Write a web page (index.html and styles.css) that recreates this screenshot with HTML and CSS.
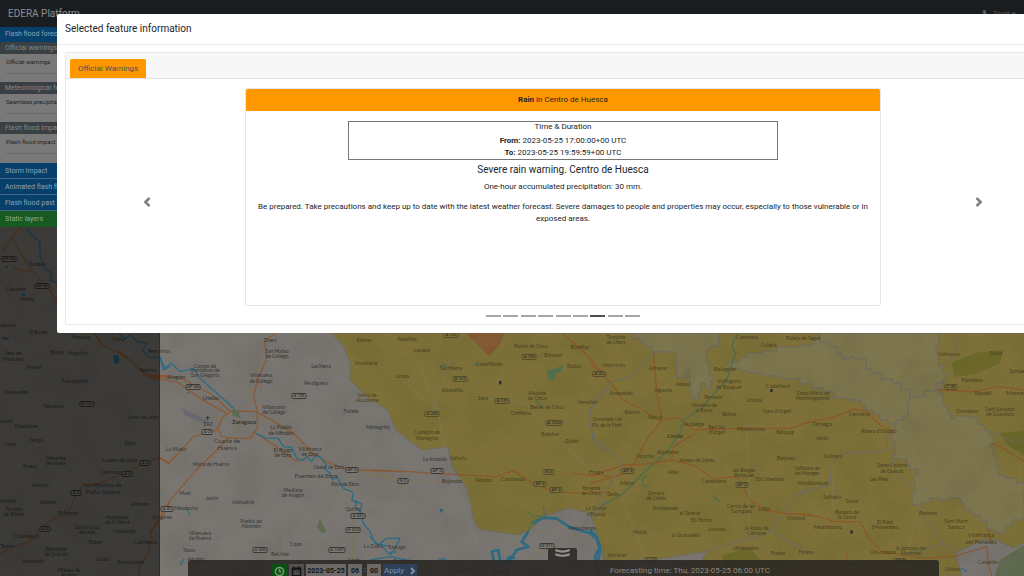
FILE: index.html
```html
<!DOCTYPE html>
<html lang="en">
<head>
<meta charset="utf-8">
<meta name="viewport" content="width=device-width, initial-scale=1">
<title>EDERA Platform</title>
<link rel="stylesheet" href="styles.css">
</head>
<body>
<svg class="map" viewBox="0 0 1024 576" preserveAspectRatio="xMinYMin slice" role="img" aria-label="Warnings map">
  <defs>
    <filter id="relief" x="0" y="0" width="100%" height="100%">
      <feTurbulence type="fractalNoise" baseFrequency="0.03" numOctaves="4" seed="8"/>
      <feColorMatrix values="0 0 0 0 0  0 0 0 0 0  0 0 0 0 0  0.5 0 0 0 -0.2"/>
    </filter>
  </defs>
  <rect class="land" width="1024" height="576"/>
  <path class="warn" d="M332 333L344 347 350 362V380L367 397 388 410 396 430 422 450 448 447 453 468 467 488 475 524 480 529 517 535 528 531 543 517 568 508 590 513 593 522 605 562 667 558 708 551 690 576H962L955 553 982 540 997 540 1013 548 1024 543V333Z"/>
  <path class="wood" d="M1024 545L1000 560 995 576H1024Z"/>
  <path class="grove" d="M952 363L975 353 1003 350 1000 363 975 374 955 377ZM1000 433L1024 431V455L1008 446ZM722 555L750 548 762 562 790 563 770 576H726Z"/>
  <path class="severe" d="M470 337L489 356 500 345 504 333H466Z"/>
  <path class="nodata" d="M633 333V338H640V342H645V346H652V352H676V370H677V378H686V370H690V390H691V397H695V400H698V392H701V383H706V388H711V380H713V376H709V362H706V350H710V346H719V333Z"/>
  <path class="nodata" d="M728 362V368H738V370H748V373H763V376H782V379H800V384H812V388H823V392H834V398H848V400H861V404H866V410H873V414H880V420H888V424H895V430H892V442H895V455H893V459H907V465H910V469H918V475H914V483H915V493H912V505H922V502H930V498H938V500H950V498H961V503H965V510H972V515H980V521H987V526H988V530H995V533H1005V526H1012V520H1024V483H1016V478H1005V475H998V465H996V456H993V447H989V444H993V437H989V430H984V425H978V418H970V416H955V419H951V413H947V406H943V394H938V390H942V380H946V372H943V366H938V353H936V347H939V333H820V338H813V345H800V347H777V351H763V353H748V357H740V362Z"/>
  <path class="border" d="M820 334V342H830V347H837V353H842V359H850V357H855V359H866V369H872V373H882V379H893V383H901V389H910V397H924V391H936V383H945M910 397V402H908V416H904V420H896V425"/>
  <rect class="shade" width="1024" height="576" filter="url(#relief)"/>
  <g transform="translate(0 220) scale(.3333)">
    <path class="road" d="M8 95L35 52 65 20M35 52L90 145 150 210 170 250M38 140L60 150 95 155M275 330L305 372 360 400 400 430 440 470 510 475M285 340L310 378 370 402 415 445 450 468 510 467"/>
    <path class="minor" d="M60 130L45 245 10 305M0 385L60 400 110 415 180 398 300 375M65 235L95 240 125 275 168 305"/>
    <path class="river" d="M78 25L95 45 120 65V110L135 145 155 160 150 182 170 186M355 340L375 355 392 345 412 365 440 370 428 390 450 415 480 410 490 450 510 440"/>
    <path class="lake" d="M340 405L357 407V430L343 431ZM16 137H23V145H16ZM66 220H75V227H66Z"/>
  </g>
  <g transform="translate(0 390) scale(.3333)">
    <path class="road" d="M0 490L50 468 90 455 120 415 165 385 200 375 225 320 250 285 300 280 370 250 435 218 478 202 510 220M510 335L485 385 455 420 445 490 420 525 417 560"/>
    <path class="minor" d="M20 330L60 380 85 440 80 500 130 550"/>
    <path class="faint" d="M250 50L290 100 298 200 290 280M370 115L450 35 475 0"/>
  </g>
  <g transform="translate(150 330) scale(.3333)">
    <path class="road" d="M0 135L90 143 130 165 180 190 240 243 315 245 375 275 430 310 490 370 530 395 590 420 720 422M375 12L345 30 348 90 325 145 310 195 322 245V295L300 325 260 325 215 320 202 295 220 260 242 245M0 145L80 155 150 205 230 250M30 385L55 400 85 370 130 320 200 300M0 610L60 510 130 430 235 325M308 305L380 350 440 395 490 372"/>
    <path class="minor" d="M345 30L315 130 285 240M320 260L380 280 440 340 560 410 720 440M300 320L440 400 520 450 600 530 610 560 608 690M180 262L230 265M245 290L315 260M260 250L270 290 250 315"/>
    <path class="faint" d="M395 60L350 150 325 240M440 395L410 520 400 690M0 640L130 625 310 655M110 180L60 240M460 190L520 100"/>
    <path class="river" d="M30 80L45 115 65 100 90 125 130 115 150 145 200 190 230 215 250 235 270 262M318 310L350 325 385 325 400 350 425 352 440 385 460 392 470 380 485 395 495 378 510 380 530 405 522 415 540 430 548 450 560 440 580 475 605 485 610 490 605 510 622 515 615 530 630 545 640 580 660 605 675 640 720 650M610 515L635 520 632 545M110 535L120 555M90 705L103 685"/>
    <path class="wood" d="M485 580L500 590 510 568 530 605 515 610 505 595ZM108 185H120V192H108ZM245 245L270 243 265 262 248 258Z"/>
    <path class="zone" d="M95 235L180 275 165 283 105 255Z"/>
    <path class="plane" d="M167 263H179M173 257V270"/>
  </g>
  <g transform="translate(370 330) scale(.3333)">
    <path class="road" d="M0 422L120 425 190 430 380 440 430 422 480 455 550 485 640 490 720 485M580 12L635 60 690 120 715 135M600 430L720 440"/>
    <path class="minor" d="M0 437L130 455 350 452 540 425 700 440M460 690L560 650 640 600 700 550"/>
    <path class="faint" d="M95 150L190 230 220 240M0 540L80 460M140 90L200 230 235 400 340 690M240 90L185 250M350 205L470 220 530 300 720 470M650 385L700 440"/>
    <path class="river wide" d="M490 580L520 563 560 565 600 592 660 610 680 625 690 660 685 690M475 605L455 635 475 650 440 660 415 700 390 690 385 660 365 665 375 705 405 700M405 700L420 680 435 685"/>
    <path class="river" d="M0 620L25 645 50 625H90L75 655 60 675M30 640L55 670 80 665M0 690L60 680 110 690 180 700 220 685 270 720 310 715 340 735"/>
    <path class="lake" d="M210 535L222 541 212 548Z"/>
    <path class="pond" d="M530 122L555 117 578 104 575 125 560 128 550 150 542 150 535 145ZM318 100H326V108H318ZM215 103H230V111H215Z"/>
    <path class="teal" d="M475 545L490 560 525 558 520 530M475 605L485 575 520 560M497 210L520 235"/>
    <path class="border" d="M720 175L680 200 657 255 670 330 720 370M670 575L710 510 635 590"/>
    <path class="pin" d="M387 153H394V163H387Z"/>
  </g>
  <g transform="translate(590 330) scale(.3333)">
    <path class="road" d="M0 100L60 155 100 210 150 235 205 270 265 262 310 300 440 295 600 295 660 275M190 65L200 180 215 270 170 330 130 405M0 440L100 405 170 402 245 390 310 405 370 445 440 440 480 510 520 540 600 552 660 552M245 390L250 350 315 310M0 460L90 435 130 405"/>
    <path class="minor" d="M250 320L315 305 340 300M0 475L60 440"/>
    <path class="faint" d="M250 320L430 420M310 80L170 230 120 255M70 440L170 690M480 640L470 280"/>
    <path class="teal" d="M440 10L425 50 437 70 410 150 360 205 330 240 280 270 270 310 235 360 170 420 100 490 40 525M170 435L155 450 163 470 180 465M370 500L390 515"/>
    <path class="border" d="M190 65L125 140 65 155 0 240 15 330 60 360 100 405 20 520 0 560M355 663L545 605 600 530 620 495 660 480M545 605L660 670"/>
    <path class="river wide" d="M0 600L20 620 30 650 15 680 25 738"/>
    <path class="pin" d="M541 177H548V186H541Z"/>
  </g>
  <g transform="translate(800 330) scale(.3333)">
    <path class="road" d="M0 283L50 270 100 263 160 237 200 245 240 285 285 310M415 180L520 185 600 170 672 180M575 340L610 355 672 395M0 553L60 560 100 575 180 575 210 630 245 665 370 685 460 680 560 650 565 700 575 738M140 670V738M565 600L575 640"/>
    <path class="border" d="M0 488L90 465 95 395 130 370 265 362 260 320 285 290M280 385L290 430 335 470M365 530L375 570 430 640 310 675M430 640L465 670M460 20L470 50 440 110M560 300L650 340 672 325"/>
    <path class="faint" d="M0 470L130 640M95 400L100 540M360 510L320 680"/>
    <path class="river" d="M485 715L500 725"/>
    <path class="pin" d="M151 601H158V611H151Z"/>
  </g>
  <g id="labels"></g>
</svg>

<header class="navbar">
  <a class="brand" href="#">EDERA Platform</a>
  <a class="tools" href="#">
    <svg class="wrench" viewBox="0 0 16 16" aria-hidden="true"><path d="M2 1a4 4 0 0 1 6 5l7 7-2 2-7-7A4 4 0 0 1 1 3l3 2 1-1z"/></svg>
    Tools ▾
  </a>
</header>

<aside class="sidebar">
  <a class="group" href="#">Flash flood forecast</a>
  <section class="layers">
    <h2 class="layers-title">Official warnings</h2>
    <a class="layer" href="#">Official warnings</a>
    <hr class="rule">
  </section>
  <section class="layers">
    <h2 class="layers-title">Meteorological forecasts</h2>
    <a class="layer" href="#">Seamless precipitation</a>
    <hr class="rule">
  </section>
  <section class="layers">
    <h2 class="layers-title">Flash flood impact</h2>
    <a class="layer" href="#">Flash flood impact</a>
    <hr class="rule">
  </section>
  <a class="group" href="#">Storm Impact</a>
  <a class="group" href="#">Animated flash flood</a>
  <a class="group" href="#">Flash flood past events</a>
  <a class="group static" href="#">Static layers</a>
</aside>

<footer class="timebar">
  <button class="fold" type="button" aria-label="Hide time bar">
    <svg viewBox="0 0 28 12" aria-hidden="true"><path d="M7 2Q14 5 21 2M7 6Q14 9 21 6"/></svg>
  </button>
  <form class="picker">
    <button class="now" type="button" aria-label="Now"><svg viewBox="0 0 16 16" aria-hidden="true"><circle cx="8" cy="8" r="5"/><path d="M8 5V8L10 9"/></svg></button>
    <button class="cal" type="button" aria-label="Open calendar"><svg viewBox="0 0 16 16" aria-hidden="true"><path d="M3 4H13V13H3ZM3 5H13M5 2V4M11 2V4M5 8H6M8 8H9M10 8H11"/></svg></button>
    <input class="field date" type="text" value="2023-05-25" aria-label="Date">
    <input class="field part" type="text" value="06" aria-label="Hour">
    <span class="colon">:</span>
    <input class="field part" type="text" value="00" aria-label="Minute">
    <button class="apply" type="button">Apply <svg viewBox="0 0 8 8" aria-hidden="true"><path d="M3 1L6 4 3 7"/></svg></button>
  </form>
  <p class="forecast">Forecasting time: Thu, 2023-05-25 06:00 UTC</p>
</footer>

<div class="modal" role="dialog" aria-labelledby="modal-title">
  <div class="modal-header"><h1 class="modal-title" id="modal-title">Selected feature information</h1></div>
  <div class="panel">
    <div class="tabs"><a class="tab" href="#">Official Warnings</a></div>
    <div class="carousel">
      <button class="arrow" type="button" aria-label="Previous"><svg viewBox="0 0 8 8" aria-hidden="true"><path d="M5.25 0l1.5 1.5L4.25 4l2.5 2.5L5.25 8l-4-4z"/></svg></button>
      <article class="warning">
        <div class="warning-head"><b>Rain</b> in Centro de Huesca</div>
        <div class="warning-body">
          <div class="duration">
            <h3 class="duration-title">Time &amp; Duration</h3>
            <p class="when"><b>From:</b> 2023-05-25 17:00:00+00 UTC</p>
            <p class="when"><b>To:</b> 2023-05-25 19:59:59+00 UTC</p>
          </div>
          <h2 class="warning-title">Severe rain warning. Centro de Huesca</h2>
          <p class="text">One-hour accumulated precipitation: 30 mm.</p>
          <p class="text">Be prepared. Take precautions and keep up to date with the latest weather forecast. Severe damages to people and properties may occur, especially to those vulnerable or in exposed areas.</p>
        </div>
      </article>
      <button class="arrow" type="button" aria-label="Next"><svg viewBox="0 0 8 8" aria-hidden="true"><path d="M2.75 0l-1.5 1.5L3.75 4l-2.5 2.5L2.75 8l4-4z"/></svg></button>
    </div>
    <div class="dots"><i></i><i></i><i></i><i></i><i></i><i></i><i class="on"></i><i></i><i></i></div>
  </div>
</div>
<script src="map.js"></script>
</body>
</html>
```

FILE: styles.css
```css
* { box-sizing: border-box; }
html { height: 100%; overflow: hidden; }
body {
  margin: 0;
  height: 100%;
  position: relative;
  overflow: hidden;
  background: #777470;
  color: #212529;
  font-family: Roboto, "Liberation Sans", sans-serif;
  font-size: 8px;
  line-height: 12px;
}
h1, h2, h3, p { margin: 0; font-weight: 400; }
a { color: inherit; text-decoration: none; }
button, input { font: inherit; color: inherit; border: 0; margin: 0; padding: 0; }

.map { position: absolute; top: 0; left: 0; width: 100%; height: 100%; font-family: Lato, sans-serif; }
.land { fill: #797671; }
.shade { opacity: .2; }
.warn { fill: #7d7139; stroke: #6f6b5c; }
.severe { fill: #825a33; }
.nodata { fill: #7d754d; stroke: #6a6864; }
.grove { fill: #6b6829; }
.wood { fill: #5f6a50; }
.zone { fill: #67676f; }
.lake { fill: #24627e; }
.pond { fill: #4f7050; }
.pin { fill: #292942; }
.road, .minor, .faint, .river, .teal, .border, .plane { fill: none; stroke-linejoin: round; }
.road { stroke: #8f5026; stroke-width: 4; opacity: .75; }
.minor { stroke: #8b6f2a; stroke-width: 2; opacity: .6; }
.faint { stroke: #85827b; stroke-width: 2; opacity: .5; }
.river { stroke: #2f6a83; stroke-width: 4; }
.river.wide { stroke-width: 8; }
.teal { stroke: #4f6c4b; stroke-width: 4; }
.border { stroke: #6a6864; stroke-width: 1; }
g[transform] > .border { stroke-width: 3; }
.plane { stroke: #26335c; stroke-width: 3; }
.place { font-size: 5px; text-anchor: middle; fill: #353433; }
.place.muted { fill: #483f1d; }
.place.town { font-size: 6px; }
.place.city { font-weight: 700; }
.shield { fill: #7e7b75; stroke: #3a3936; stroke-width: 1; }
.shield.muted { fill: #7c7038; stroke: #544c2a; }
.shield-text { font-size: 4px; font-weight: 700; text-anchor: middle; fill: #33322f; }

.navbar {
  position: relative;
  display: flex;
  justify-content: space-between;
  align-items: center;
  height: 27px;
  padding: 0 8px;
  background: #1a1d20;
}
.brand { font-size: 10px; color: #8c8e90; }
.tools { display: flex; align-items: center; gap: 4px; font-size: 7px; color: #55585a; }
.wrench { width: 7px; height: 7px; fill: #6b6d6f; }

.sidebar {
  position: relative;
  width: 160px;
  height: 100%;
  background: rgba(0, 0, 0, .5);
  border-right: 1px solid #302e2c;
  font-size: 7px;
  white-space: nowrap;
}
.group { display: block; height: 16px; padding: 0 5px; line-height: 17px; background: #07406b; border-bottom: 1px solid #426683; color: #8ea3b3; }
.group.static { border: 0; background: #175a22; color: #8dab91; }
.group:first-child { height: 15px; line-height: 15px; border: 0; }
.layers { height: 40px; background: #797979; }
.layers:nth-of-type(3) { height: 41px; }
.layers-title { height: 12px; padding: 0 5px; font-size: 7px; line-height: 13px; background: #3a3f43; color: #858789; }
.layer { display: block; height: 18px; padding: 2px 6px 0; font-size: 6px; color: #232323; }
.rule { margin: 1px 6px 0; border: 0; border-top: 1px solid #6a6a6a; }

.timebar {
  position: absolute;
  left: 188px;
  right: 85px;
  bottom: 0;
  height: 16px;
  padding: 4px 0 0 84px;
  display: flex;
  justify-content: space-between;
  border-radius: 3px 3px 0 0;
  background: rgba(42, 39, 35, .88);
}
.fold { position: absolute; bottom: 100%; left: 48%; width: 29px; height: 12px; border-radius: 2px 2px 0 0; background: #34322e; }
.fold svg { display: block; width: 100%; fill: none; stroke: #94928e; stroke-width: 2; }
.picker { display: flex; gap: 2px; height: 14px; font-size: 7px; }
.picker button { display: flex; align-items: center; justify-content: center; height: 14px; }
.picker svg { fill: none; stroke: currentColor; stroke-width: 2; }
.now { width: 15px; background: #0c4f12; color: #6d9b70; }
.cal { width: 15px; background: #53514f; color: #171717; }
.now svg, .cal svg { width: 13px; height: 13px; }
.field { height: 14px; background: #6a6967; color: #151515; text-align: center; font-weight: 700; }
.date { width: 40px; }
.part { width: 14px; }
.colon { width: 1px; color: #999; line-height: 13px; }
.apply { width: 34px; gap: 4px; background: #2e3f58; color: #8190a3; border-radius: 1px; font-size: 8px; }
.apply svg { width: 8px; height: 8px; }
.forecast { width: 329px; color: #8b8883; font-size: 8px; line-height: 13px; }

.modal {
  position: absolute;
  top: 14px;
  left: 57px;
  width: calc(100% - 12px);
  padding-bottom: 8px;
  background: #fff;
  border-radius: 2px;
}
.modal-header { padding: 7px 8px 8px; border-bottom: 1px solid #e9ecef; }
.modal-title { font-size: 10px; line-height: 15px; color: #212529; }
.panel { margin: 7px 8px 0; border: 1px solid #e8e8e8; border-radius: 2px; padding-bottom: 7px; }
.tabs { display: flex; padding: 6px 4px 0; background: #f7f7f7; border-bottom: 1px solid #e3e3e3; }
.tab { padding: 4px 8px 3px; background: #ff9800; border-radius: 2px 2px 0 0; color: #495057; }
.carousel { display: grid; grid-template-columns: 15fr 65fr 15fr; column-gap: 24px; padding: 9px 8px 0; }
.arrow { display: flex; align-items: center; justify-content: center; padding-top: 9px; background: none; }
.arrow svg { width: 10px; height: 10px; fill: #7f7f7f; }
.warning { min-height: 218px; border: 1px solid #e6e6e6; border-radius: 2px; text-align: center; }
.warning-head { padding: 5px; background: #ff9800; border-radius: 2px 2px 0 0; }
.warning-body { padding: 10px; }
.duration { width: 70%; margin: 0 auto 3px; border: 1px solid #777; }
.duration-title { font-size: 8px; line-height: 10px; margin-bottom: 3px; }
.warning-title { font-size: 10px; line-height: 14px; margin-bottom: 4px; }
.text { margin-bottom: 8px; }
.dots { display: flex; justify-content: space-between; width: 154px; margin: 9px auto 0; }
.dots i { width: 15px; height: 2px; background: #a6a6a6; }
.dots .on { background: #4d4d4d; }
```

FILE: map.js
```javascript
// Place names and road shields, grouped by map tile. Coordinates are tile units, three per pixel.
const tiles = [
  { x: 0, y: 220, places: [
    [110, 132, "Tudela", "town"], [47, 207, "Cascante"], [80, 238, "Ablitas"], [20, 314, "razona", "town"],
    [113, 337, "El Buste"], [14, 355, "isel"], [40, 400, "Vera de"], [40, 416, "Moncayo"], [171, 397, "Borja", "town"],
    [233, 399, "Magallón"], [244, 351, "Fréscano"], [356, 357, "Gallur"], [101, 441, "Ambel"], [445, 451, "Pedrola"],
    [224, 482, "Fuendejalón"], [47, 517, "Talamantes"], [478, 392, "Remolinos"]
  ], shields: [[27, 116, "AP-68"], [126, 198, "AP-68"]] },
  { x: 0, y: 390, places: [
    [163, 47, "Tabuenca"], [428, 80, "Urrea de Jalón"], [18, 93, "alcena"], [79, 107, "Trasobares"], [109, 149, "Tierga"],
    [29, 161, "Oseja"], [389, 158, "Épila"], [168, 204, "Mesones"], [167, 219, "de Isuela"], [361, 210, "Lucena de Jalón"],
    [91, 228, "Illueca"], [332, 246, "Calatorao"], [119, 286, "Sestrica"], [309, 286, "La Almunia de", "town"],
    [309, 306, "Doña Godina", "town"], [25, 333, "Aniñón"], [143, 336, "Sabiñán"], [420, 341, "Alfamén"],
    [43, 356, "Torralba"], [43, 372, "de Ribota"], [205, 369, "El Frasno"], [351, 381, "Almonacid"], [351, 396, "de la Sierra"],
    [260, 411, "Santa Cruz"], [260, 426, "de Grío"], [372, 424, "Cosuenda"], [78, 439, "Calatayud", "town"],
    [285, 456, "Tobed"], [435, 456, "Cariñena", "town"], [22, 468, "Terrer"], [168, 477, "Belmonte"], [168, 492, "de Gracián"],
    [308, 507, "Codos"], [100, 513, "Maluenda"], [392, 517, "Encinacorba"], [208, 540, "Miedes de"], [208, 555, "Aragón"]
  ], shields: [[260, 42, "A-121"], [436, 219, "A-2"], [382, 251, "A-2"], [229, 308, "A-2"], [135, 418, "A-2"]] },
  { x: 150, y: 330, places: [
    [361, 31, "Zuera"], [380, 63, "San Mateo"], [380, 79, "de Gállego"], [164, 107, "Campo de"], [164, 121, "maniobras de"],
    [164, 135, "San Gregorio"], [78, 141, "Alagón", "town"], [332, 136, "Villanueva"], [332, 152, "de Gállego"],
    [512, 108, "Leciñena"], [497, 159, "Perdiguera"], [184, 205, "Utebo", "town"], [373, 230, "Villamayor"],
    [373, 245, "de Gállego"], [602, 243, "Farlete"], [684, 290, "Monegrillo"], [282, 276, "Zaragoza", "town city"],
    [173, 282, "ZAZ"], [393, 292, "La Puebla"], [393, 308, "de Alfindén"], [231, 334, "Cuarte de", "town"],
    [231, 353, "Huerva", "town"], [79, 358, "La Muela"], [400, 360, "El Burgo"], [400, 375, "de Ebro"],
    [479, 357, "Villafranca"], [479, 373, "de Ebro"], [184, 403, "María de Huerva"], [538, 411, "Osera de Ebro"],
    [498, 437, "Fuentes de Ebro", "town"], [585, 463, "Pina de Ebro"], [430, 481, "Mediana"], [430, 496, "de Aragón"],
    [105, 490, "Muel"], [186, 505, "Jaulín"], [278, 516, "Valmadrid"], [108, 535, "Mezalocha"], [608, 537, "Quinto"],
    [35, 562, "Longares"], [303, 574, "Puebla de"], [303, 589, "Albortón"], [149, 610, "Villanueva"], [149, 625, "de Huerva"],
    [118, 661, "Tosos"], [437, 641, "Codo"], [389, 673, "Belchite"], [139, 686, "Aguilón"], [668, 648, "La Zaida"],
    [613, 689, "Azaila"], [290, 728, "Azuara"],
    [641, 30, "Robres", "muted"], [648, 98, "Alcubierre", "muted"], [650, 194, "Sierra de", "muted"], [650, 209, "Alcubierre", "muted"]
  ], shields: [[129, 170, "AP-68"], [446, 198, "A-129"], [171, 307, "A-2"], [605, 420, "AP-2"], [51, 536, "A-23"],
    [623, 559, "A-221"], [609, 601, "N-232"], [330, 660, "A-220"], [561, 661, "A-1307"]] },
  { x: 370, y: 330, places: [
    [110, 27, "Poleñino", "muted"], [155, 59, "Lalueza", "muted"], [484, 48, "Pomar de Cinca", "muted"],
    [630, 50, "Binéfar", "muted town"], [550, 74, "Binaced", "muted"], [242, 114, "Sariñena", "muted town"],
    [358, 103, "Castelflorite", "muted"], [613, 107, "Esplús", "muted"], [97, 138, "Lanaja", "muted"],
    [246, 180, "Albalatillo", "muted"], [338, 204, "Sena", "muted"], [501, 188, "Albalate", "muted"],
    [501, 204, "de Cinca", "muted"], [654, 215, "Vencillón", "muted"], [530, 231, "Belver de Cinca", "muted"],
    [453, 249, "Ontiñena", "muted"], [171, 307, "Castejón de", "muted"], [171, 323, "Monegros", "muted"],
    [540, 313, "Ballobar", "muted"], [606, 332, "Zaidín", "muted"], [196, 388, "La Almolda"], [263, 384, "Valfarta", "muted"],
    [247, 454, "Bujaraloz"], [342, 451, "Peñalba", "muted"], [430, 447, "Candasnos", "muted"], [678, 427, "Fraga", "muted town"],
    [664, 474, "Torrente", "muted"], [664, 489, "de Cinca", "muted"], [678, 535, "La Granja", "muted"],
    [678, 551, "d'Escarp", "muted"], [636, 595, "Mequinenza"], [80, 652, "Sástago"], [98, 692, "Escatrón"], [268, 722, "Chiprana"]
  ], shields: [[243, 14, "A-131", 1], [477, 81, "A-130", 1], [269, 146, "A-131", 1], [688, 131, "A-22", 1],
    [397, 214, "A-131", 1], [185, 253, "A-230", 1], [551, 280, "A-1234", 1], [202, 422, "AP-2"], [98, 453, "N-2"],
    [538, 426, "N-2", 1], [511, 462, "AP-2", 1], [557, 479, "AP-2", 1], [531, 649, "N-211"], [392, 733, "N-211"]] },
  { x: 590, y: 330, places: [
    [78, 20, "Tamarite"], [78, 35, "de Litera"], [470, 20, "Camarasa"], [640, 24, "Tudela de Segre"], [537, 46, "Cubells"],
    [72, 104, "Altorricón"], [204, 113, "Almenar"], [406, 118, "Balaguer", "town"], [280, 162, "Albesa"],
    [416, 154, "Vallfogona"], [416, 170, "de Balaguer"], [564, 168, "Castellserà"], [94, 188, "Almacelles"],
    [219, 180, "Alguaire"], [370, 200, "Térmens"], [491, 209, "Linyola"], [341, 225, "Vilanova de"], [341, 241, "la Barca"],
    [126, 247, "Raimat"], [194, 262, "Alpicat"], [417, 253, "Bellvís"], [562, 242, "Ivars d'Urgell"],
    [50, 268, "Gimenells i el"], [50, 284, "Pla de la Font"], [312, 282, "Alcoletge"], [382, 291, "Bell-lloc"],
    [382, 306, "d'Urgell"], [484, 298, "Mollerussa", "town"], [584, 307, "Bellpuig"], [254, 319, "Lleida", "town city"],
    [235, 366, "Albatàrrec"], [166, 379, "Alcarràs"], [321, 391, "Artesa de Lleida"], [588, 383, "Belianes"],
    [248, 426, "Alfés"], [461, 420, "les Borges"], [461, 436, "Blanques"], [373, 453, "Castelldans"],
    [541, 448, "Els Omellons"], [110, 458, "Aitona"], [70, 492, "Seròs"], [197, 489, "Sarroca"], [197, 505, "de Lleida"],
    [225, 534, "Torrebesses"], [454, 528, "Cervià de les"], [454, 544, "Garrigues"], [523, 538, "L'Albi"],
    [301, 550, "el Soleràs"], [333, 571, "Els Torms"], [618, 564, "Vimbodí"], [382, 598, "Juncosa"], [502, 594, "la Pobla de"],
    [502, 610, "Cérvoles"], [150, 606, "Maials"], [287, 616, "la Granadella"], [467, 654, "Ulldemolins"],
    [563, 668, "Prades"], [80, 674, "Almatret"], [286, 698, "la Palma d'Ebre"]
  ].map(p => [p[0], p[1], p[2], "muted " + (p[3] || "")]),
  shields: [[28, 132, "A-22", 1], [115, 423, "AP-2", 1], [457, 464, "AP-2", 1], [184, 690, "C-12", 1]] },
  { x: 800, y: 330, places: [
    [448, 72, "Vallmanya"], [588, 69, "Súria", "town"], [652, 124, "Santpe"], [516, 150, "Fonollosa"],
    [548, 188, "Rajadell"], [648, 188, "Manres", "town"], [38, 190, "Santa Maria de"], [38, 205, "Montmagastrell"],
    [502, 242, "Grimalosa"], [600, 237, "Sant Salvador"], [600, 253, "de Guardiola"], [177, 252, "Cervera", "town"],
    [65, 283, "Tàrrega", "town"], [236, 303, "Ribera d'Ondara"], [66, 324, "Verdú"], [100, 377, "Guimerà"],
    [276, 406, "Santa Coloma"], [276, 422, "de Queralt"], [22, 414, "Vallbona de"], [22, 430, "les Monges"],
    [238, 447, "Les Piles"], [40, 458, "Montblanquet"], [96, 502, "Solivella"], [155, 513, "Sarral"], [140, 545, "Barberà de"],
    [140, 560, "la Conca"], [384, 549, "Pontons"], [467, 574, "Sant Martí"], [467, 590, "Sarroca"], [255, 576, "El Pont"],
    [255, 592, "d'Armentera"], [83, 592, "Montblanc", "town"], [543, 616, "Vilafranca", "town"], [543, 636, "del Penedès", "town"],
    [333, 654, "la Joncosa del"], [333, 669, "Montmell"], [250, 666, "Vila-rodona"], [18, 666, "Farena"], [156, 698, "Valls"],
    [563, 695, "Canyelles"], [460, 716, "L'Arboç"], [364, 697, "La Bisbal del"], [364, 712, "Penedès"], [89, 722, "Alcover"]
  ].map(p => [p[0], p[1], p[2], "muted " + (p[3] || "")]),
  shields: [[454, 172, "C-25", 1], [300, 692, "AP-7", 1]] }
];

const layer = document.getElementById("labels");

function add(tag, className, attributes, text) {
  const node = document.createElementNS("http://www.w3.org/2000/svg", tag);
  node.setAttribute("class", className);
  for (const key in attributes) node.setAttribute(key, attributes[key]);
  if (text) node.textContent = text;
  layer.append(node);
}

for (const tile of tiles) {
  for (const [x, y, text, kind = ""] of tile.places) {
    add("text", "place " + kind, { x: Math.round(tile.x + x / 3), y: Math.round(tile.y + y / 3 + 2) }, text);
  }
  for (const [x, y, text, muted] of tile.shields) {
    const cx = Math.round(tile.x + x / 3);
    const cy = Math.round(tile.y + y / 3);
    const width = text.length * 2 + 4;
    add("rect", "shield" + (muted ? " muted" : ""), { x: cx - width / 2, y: cy - 2.5, width, height: 5, rx: 1 });
    add("text", "shield-text", { x: cx, y: cy + 1 }, text);
  }
}
```
